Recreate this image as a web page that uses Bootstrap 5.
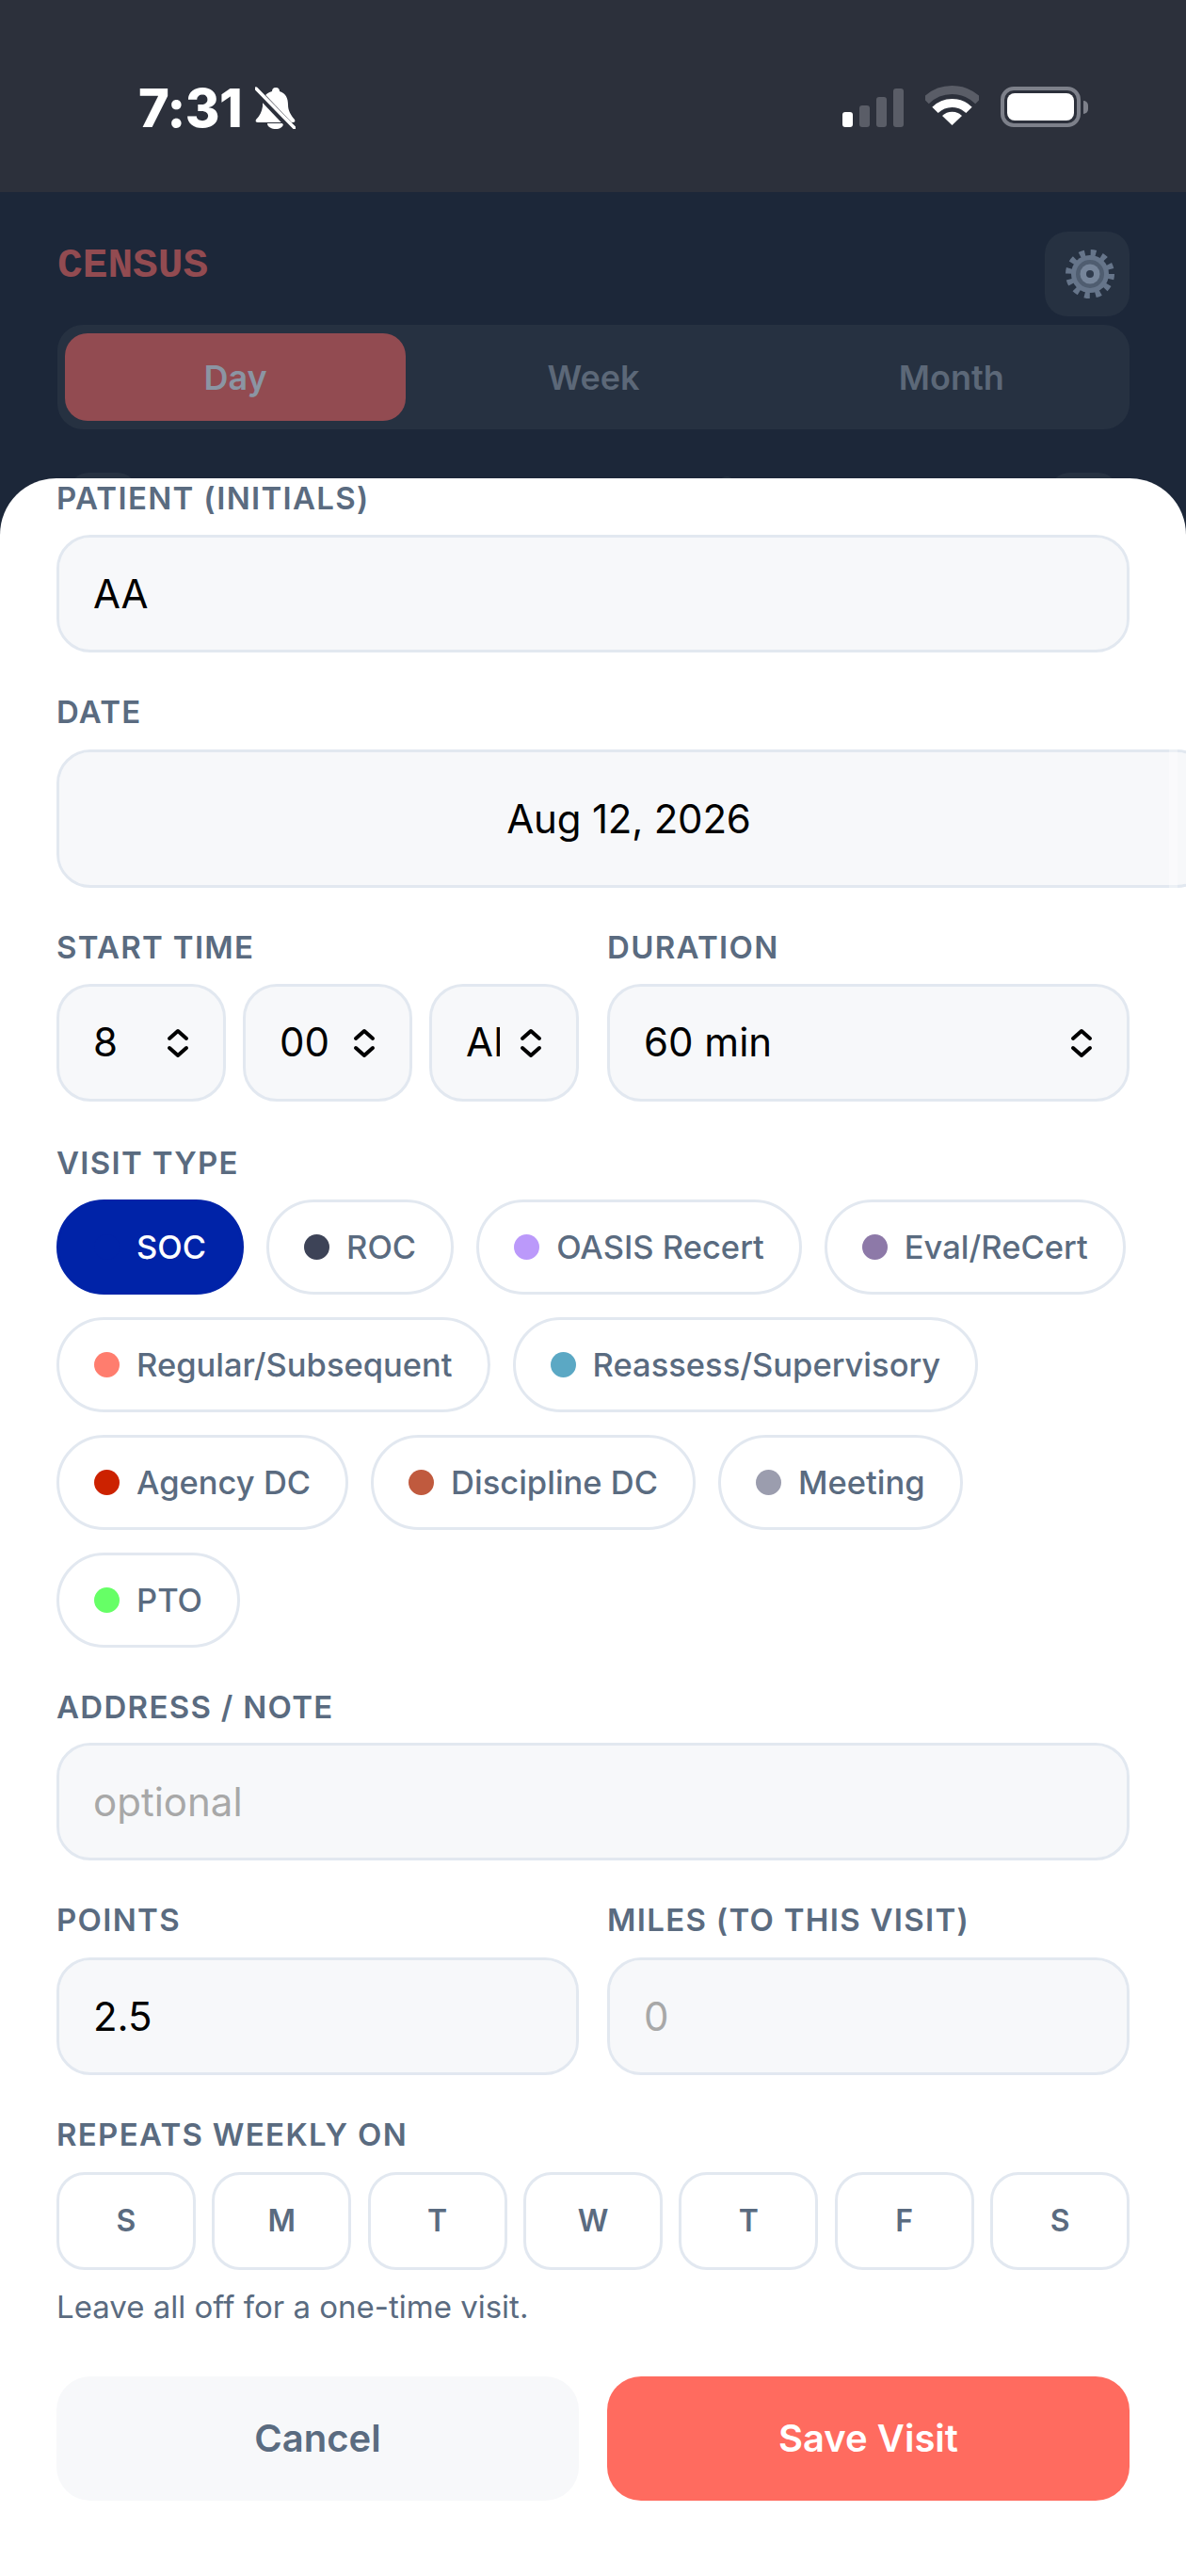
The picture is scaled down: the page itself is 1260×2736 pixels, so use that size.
<!DOCTYPE html>
<html lang="en">
<head>
    <meta charset="UTF-8">
    <meta name="viewport" content="width=device-width, initial-scale=1.0">
    <title>Census - Add Visit</title>
    <link href="https://cdn.jsdelivr.net/npm/bootstrap@5.3.0/dist/css/bootstrap.min.css" rel="stylesheet">
    <style>
        html, body { height: 2736px; overflow: hidden; background: #fff; }
        body { font-family: "Inter", "Liberation Sans", sans-serif; position: relative; }

        /* status bar */
        .status-strip { height: 204px; background: #2c303b; color: #fff; padding: 90px 104px 0 147px; }
        .clock { font-size: 56px; font-weight: 800; line-height: 50px; letter-spacing: -.5px; }
        .bell-icon { margin: 2px 0 0 14px; }
        .signal-bar { width: 11px; border-radius: 3px; background: #5a5d67; }
        .signal-bar.on { background: #fff; }
        .battery-box { width: 85px; height: 43px; border: 4px solid #7d808a; border-radius: 14px; padding: 3px; }
        .battery-fill { height: 100%; background: #fff; border-radius: 8px; }
        .battery-tip { width: 5px; height: 14px; background: #7d808a; border-radius: 0 5px 5px 0; margin-left: 3px; }

        /* dimmed header behind the sheet */
        .dim-head { height: 380px; background: #1c2739; padding: 42px 60px 0 61px; overflow: hidden; position: relative; }
        .census-title { font-family: "Liberation Mono", monospace; font-size: 44.500px; font-weight: 700; color: #924b51; line-height: 46px; padding-top: 13px; }
        .gear-btn { width: 90px; height: 90px; border-radius: 24px; background: #263141; }
        .gear-icon { margin-left: 6px; }
        .seg-wrap { height: 111px; margin-top: 9px; padding: 9px 8px; gap: 18px; background: #263141; border-radius: 27px; }
        .seg-item { flex: 1 1 0; font-size: 36px; font-weight: 600; color: #5c6878; border-radius: 24px; }
        .seg-item.on { background: #924b51; color: #8b95a3; }
        .peek-row { margin-top: 46px; padding: 0 13px; }
        .peek-btn { width: 71px; height: 40px; border-radius: 24px; background: #263141; }
        .peek-dot { position: absolute; left: 764px; top: 302px; width: 16px; height: 16px; border-radius: 50%; background: #263141; }

        /* sheet */
        .sheet { position: absolute; left: 0; right: 0; top: 508px; bottom: 0; background: #fff; border-radius: 60px 60px 0 0; padding: 1px 60px 0; overflow: hidden; }
        .fld-label { display: block; font-size: 33px; font-weight: 600; line-height: 40px; letter-spacing: 1.3px; color: #5a6b80; margin: 0 0 20px; text-transform: uppercase; }
        .fld-label.tight { margin-bottom: 18px; }
        .fld-label.first { margin-bottom: 19px; }
        .fld-block { margin-bottom: 43px; }
        .fld-block.time-row { margin-bottom: 45px; }
        .fld-input.form-control, .fld-input.form-select { height: 125px; font-size: 42px; line-height: 1.2; color: #000; background-color: #f7f8fa; border: 3px solid #e2e8f0; border-radius: 36px; padding: 0 36px; box-shadow: none; }
        .fld-input::placeholder { color: #a8a8a8; opacity: 1; }
        .date-field.form-control { width: 1226px; max-width: none; height: 147px; text-align: center; letter-spacing: -.2px; padding-right: 46px; }
        .scroll-thumb { position: absolute; left: 1242px; top: 288px; width: 9px; height: 147px; background: rgba(255,255,255,.35); }
        .two-col { display: grid; grid-template-columns: 1fr 1fr; column-gap: 30px; }
        .fld-input.form-select { background-repeat: no-repeat; background-size: 24px 32px; background-position: right 36px center;
            background-image: url("data:image/svg+xml,%3Csvg xmlns='http://www.w3.org/2000/svg' viewBox='0 0 24 32'%3E%3Cpath d='M3 11l9-8 9 8M3 21l9 8 9-8' fill='none' stroke='%23000' stroke-width='4' stroke-linecap='round' stroke-linejoin='round'/%3E%3C/svg%3E");
        }
        .fld-input.time-sel { flex: 1 1 0; min-width: 0; padding: 0 81px 0 36px; }
        .fld-input.time-ampm { flex: 0 0 159px; }

        .chip-btn { display: inline-flex; align-items: center; gap: 18px; height: 101px; padding: 0 37px; font-size: 34.500px; font-weight: 500; color: #5a6b80; background: #fff; border: 3px solid #e2e8f0; border-radius: 51px; white-space: nowrap; }
        .chip-btn.on { background: #0023a8; border-color: #0023a8; color: #fff; }
        .chip-dot { width: 27px; height: 27px; border-radius: 50%; flex: none; }

        .day-btn { flex: 1 1 0; height: 104px; font-size: 32px; font-weight: 600; color: #5a6b80; background: #fff; border: 3px solid #e2e8f0; border-radius: 30px; padding: 0; }
        .hint-line { font-size: 33px; line-height: 40px; color: #5a6b80; margin: 19px 0 54px; }
        .act-btn { height: 132px; font-size: 40px; font-weight: 600; border: 0; border-radius: 36px; padding-top: 6px; }
        .act-cancel { background: #f7f8fa; color: #5a6b80; }
        .act-save { background: #ff6b5f; color: #fff; }
    </style>
</head>
<body>

    <!-- status bar -->
    <div class="status-strip d-flex justify-content-between align-items-start">
        <div class="d-flex align-items-start">
            <span class="clock">7:31</span>
            <svg class="bell-icon" width="43" height="45" viewBox="0 0 43 45">
                <path d="M22 1c3 0 4 2 4 4 7 2 9 8 9 14 0 7 3 11 7 16 1 2 0 3-2 3H3c-2 0-3-1-2-3 4-4 6-8 7-14 0-8 2-14 10-16 0-2 1-4 4-4z" fill="#fff"/>
                <path d="M13 39h17c0 4-4 6-8 6s-9-2-9-6z" fill="#fff"/>
                <path d="M1 4l38 40" stroke="#2c303b" stroke-width="8"/>
                <path d="M1 2l41 42" stroke="#fff" stroke-width="3.500" stroke-linecap="round"/>
            </svg>
        </div>
        <div class="d-flex align-items-end">
            <div class="d-flex align-items-end" style="gap:7px;height:45px">
                <div class="signal-bar on" style="height:16px"></div>
                <div class="signal-bar" style="height:23px"></div>
                <div class="signal-bar" style="height:32px"></div>
                <div class="signal-bar" style="height:41px"></div>
            </div>
            <svg width="57" height="44" viewBox="0 0 57 44" style="margin-left:23px">
                <path d="M.6 16.100a39.500 39.500 0 0 1 55.800 0" fill="none" stroke="#5a5d67" stroke-width="9"/>
                <path d="M10.500 25.900a25.500 25.500 0 0 1 36 0" fill="none" stroke="#fff" stroke-width="9"/>
                <path d="M18 32a15 15 0 0 1 21 0L28.500 42z" fill="#fff"/>
            </svg>
            <div class="d-flex align-items-center" style="margin-left:23px">
                <div class="battery-box"><div class="battery-fill"></div></div>
                <div class="battery-tip"></div>
            </div>
        </div>
    </div>

    <!-- screen behind the sheet -->
    <div class="dim-head">
        <div class="d-flex justify-content-between align-items-start">
            <div class="census-title">CENSUS</div>
            <div class="gear-btn d-flex align-items-center justify-content-center">
                <svg class="gear-icon" width="52" height="52" viewBox="0 0 52 52">
                    <circle cx="26" cy="26" r="22" fill="none" stroke="#66758a" stroke-width="8" stroke-dasharray="5.500 6.020"/>
                    <circle cx="26" cy="26" r="20" fill="#66758a"/>
                    <circle cx="26" cy="26" r="15" fill="#4f5d70"/>
                    <circle cx="26" cy="26" r="10.500" fill="#76859a"/>
                    <circle cx="26" cy="26" r="4" fill="#2f3b4d"/>
                </svg>
            </div>
        </div>
        <div class="seg-wrap d-flex">
            <div class="seg-item on d-flex align-items-center justify-content-center">Day</div>
            <div class="seg-item d-flex align-items-center justify-content-center">Week</div>
            <div class="seg-item d-flex align-items-center justify-content-center">Month</div>
        </div>
        <div class="peek-row d-flex justify-content-between">
            <div class="peek-btn"></div>
            <div class="peek-btn"></div>
        </div>
        <div class="peek-dot"></div>
    </div>

    <!-- add visit sheet -->
    <div class="sheet">
        <div class="fld-block">
            <label class="fld-label first">Patient (initials)</label>
            <input class="form-control fld-input" value="AA">
        </div>
        <div class="fld-block">
            <label class="fld-label">Date</label>
            <input class="form-control fld-input date-field" value="Aug 12, 2026">
            <div class="scroll-thumb"></div>
        </div>
        <div class="fld-block time-row two-col">
            <div>
                <label class="fld-label first">Start time</label>
                <div class="d-flex" style="gap:18px">
                    <select class="form-select fld-input time-sel"><option>8</option></select>
                    <select class="form-select fld-input time-sel"><option>00</option></select>
                    <select class="form-select fld-input time-sel time-ampm"><option>AM</option></select>
                </div>
            </div>
            <div>
                <label class="fld-label first">Duration</label>
                <select class="form-select fld-input"><option>60 min</option></select>
            </div>
        </div>
        <div class="fld-block">
            <label class="fld-label first">Visit type</label>
            <div class="d-flex flex-wrap" style="gap:24px 24px">
                <button class="chip-btn on"><span class="chip-dot" style="background:#0023a8"></span>SOC</button>
                <button class="chip-btn"><span class="chip-dot" style="background:#3d4357"></span>ROC</button>
                <button class="chip-btn"><span class="chip-dot" style="background:#bb99fa"></span>OASIS Recert</button>
                <button class="chip-btn"><span class="chip-dot" style="background:#8d79a8"></span>Eval/ReCert</button>
                <button class="chip-btn"><span class="chip-dot" style="background:#ff7d6e"></span>Regular/Subsequent</button>
                <button class="chip-btn"><span class="chip-dot" style="background:#5ba8c4"></span>Reassess/Supervisory</button>
                <button class="chip-btn"><span class="chip-dot" style="background:#cc2200"></span>Agency DC</button>
                <button class="chip-btn"><span class="chip-dot" style="background:#c05a3e"></span>Discipline DC</button>
                <button class="chip-btn"><span class="chip-dot" style="background:#9b9dae"></span>Meeting</button>
                <button class="chip-btn"><span class="chip-dot" style="background:#66ff66"></span>PTO</button>
            </div>
        </div>
        <div class="fld-block">
            <label class="fld-label tight">Address / note</label>
            <input class="form-control fld-input" placeholder="optional">
        </div>
        <div class="fld-block two-col">
            <div>
                <label class="fld-label">Points</label>
                <input class="form-control fld-input" value="2.5">
            </div>
            <div>
                <label class="fld-label">Miles (to this visit)</label>
                <input class="form-control fld-input" placeholder="0">
            </div>
        </div>
        <div>
            <label class="fld-label">Repeats weekly on</label>
            <div class="d-flex" style="gap:17.500px">
                <button class="day-btn">S</button>
                <button class="day-btn">M</button>
                <button class="day-btn">T</button>
                <button class="day-btn">W</button>
                <button class="day-btn">T</button>
                <button class="day-btn">F</button>
                <button class="day-btn">S</button>
            </div>
            <p class="hint-line">Leave all off for a one-time visit.</p>
        </div>
        <div class="two-col">
            <button class="btn act-btn act-cancel">Cancel</button>
            <button class="btn act-btn act-save">Save Visit</button>
        </div>
    </div>

    <script src="https://cdn.jsdelivr.net/npm/bootstrap@5.3.0/dist/js/bootstrap.bundle.min.js"></script>
</body>
</html>
